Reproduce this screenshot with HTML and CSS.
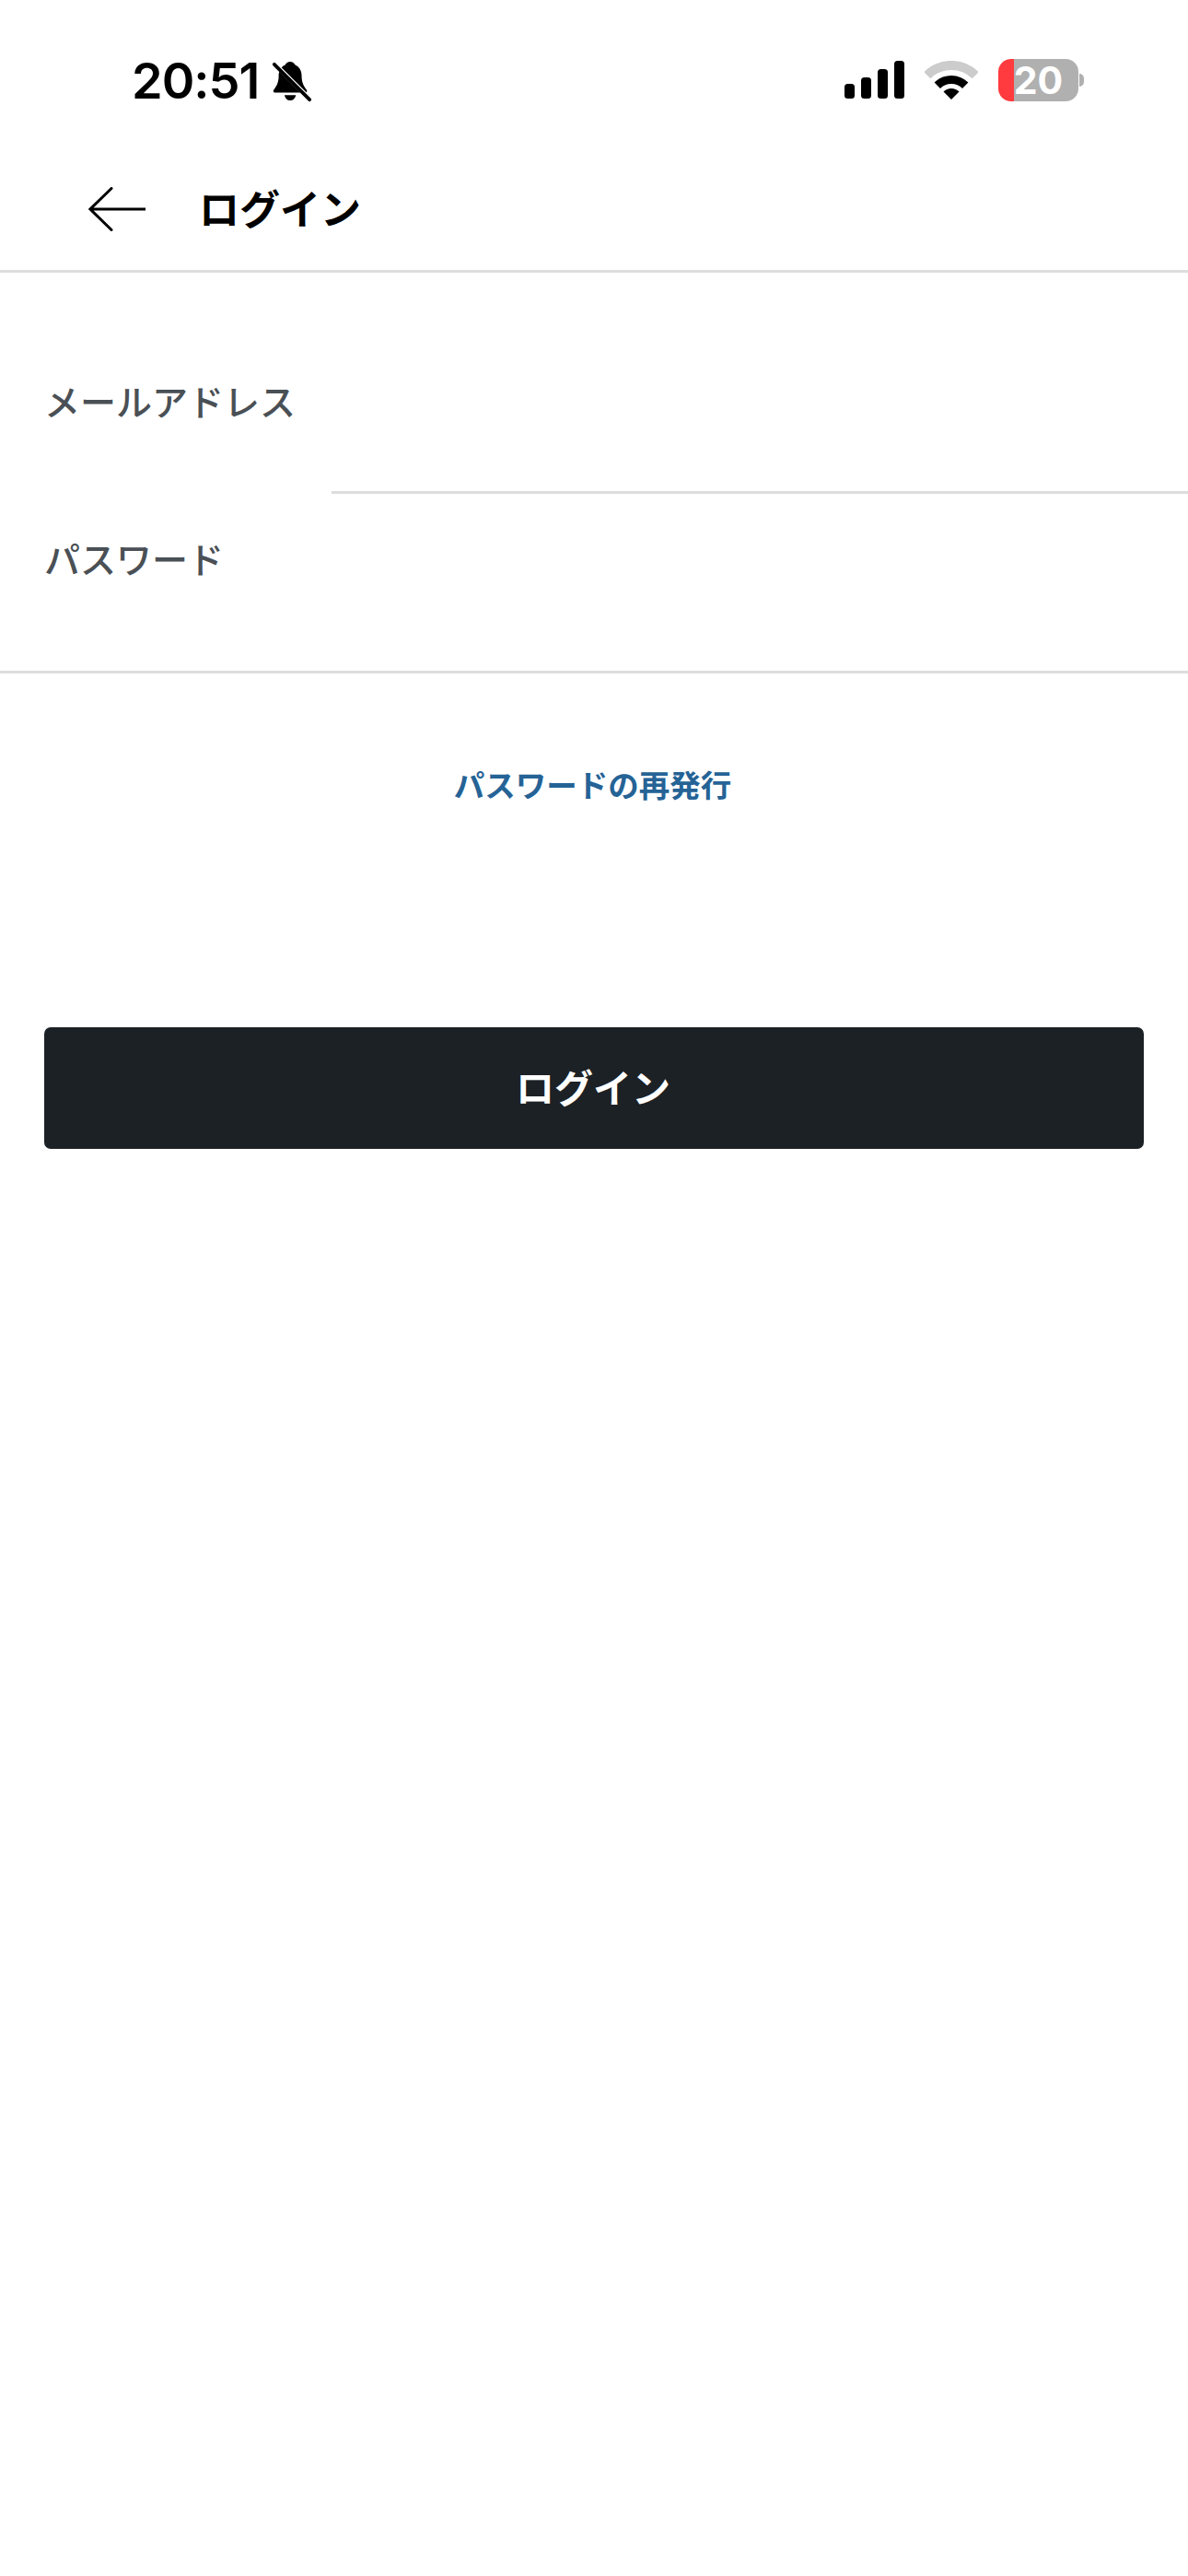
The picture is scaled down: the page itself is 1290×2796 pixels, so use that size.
FILE: index.html
```html
<!DOCTYPE html>
<html lang="ja">

<head>
	<meta charset="utf-8" />
	<title>ログイン</title>
	<link rel="stylesheet" href="styles.css">
</head>

<body>
	<div class="statusbar">
		<span class="statusbar-time">20:51</span>
		<svg class="icon-bell" width="46" height="48" viewBox="0 0 48 48">
			<path d="M22 2c-3 0-5 2-6 4-5 2-7 7-7 12 0 7-2 11-5 15-2 2-1 4 1 4h34c2 0 3-2 1-4-3-4-5-8-5-15 0-5-2-10-7-12-1-2-3-4-6-4z" />
			<path d="M15.500 40h13c-1 4-3 6-6.500 6s-5.500-2-6.500-6z" />
			<path class="bell-halo" d="M1 1l42 42" />
			<path class="bell-slash" d="M4 5l40 40" />
		</svg>
		<div class="statusbar-right">
			<svg width="65" height="41" viewBox="0 0 65 41">
				<rect x="0" y="25" width="11" height="16" rx="3.500" />
				<rect x="18" y="18" width="11" height="23" rx="3.500" />
				<rect x="36" y="9" width="11" height="32" rx="3.500" />
				<rect x="54" y="0" width="11" height="41" rx="3.500" />
			</svg>
			<svg class="icon-wifi" width="58" height="42" viewBox="0 0 58 42">
				<path class="wifi-outer" d="M2.800 15.800a37 37 0 0 1 52.400 0" />
				<path class="wifi-middle" d="M13.800 26.800a21.500 21.500 0 0 1 30.400 0" />
				<path d="M29 42l-8.500-8.500a12 12 0 0 1 17 0z" />
			</svg>
			<div class="battery">
				<div class="battery-body">20</div>
				<div class="battery-cap"></div>
			</div>
		</div>
	</div>

	<div class="header">
		<svg class="icon-back" width="62" height="48" viewBox="0 0 62 48">
			<path d="M62 24H2M25 1.500L2 24l23 22.500" />
		</svg>
		<span class="header-title">ログイン</span>
	</div>

	<div class="form">
		<div class="form-row form-row-email">
			<div class="form-label">メールアドレス</div>
			<div class="form-field"></div>
		</div>
		<div class="form-row form-row-password">
			<div class="form-label">パスワード</div>
		</div>
	</div>

	<a class="reset-link" href="#">パスワードの再発行</a>

	<a class="button-login" href="#">ログイン</a>
</body>

</html>
```

FILE: styles.css
```css
body {
	margin: 0;
	background: #fff;
	color: #000;
	font-family: "Noto Sans CJK JP", "Noto Sans", sans-serif;
}

a {
	text-decoration: none;
}

/* Status bar */

.statusbar {
	display: flex;
	align-items: center;
	box-sizing: border-box;
	height: 160px;
	padding: 16px 113px 0 143px;
}

.statusbar-time {
	font-family: Inter, sans-serif;
	font-size: 54px;
	font-weight: 600;
	letter-spacing: -1px;
	line-height: 60px;
}

.icon-bell {
	margin-left: 13px;
}

.bell-halo {
	fill: none;
	stroke: #fff;
	stroke-width: 5;
}

.bell-slash {
	fill: none;
	stroke: #000;
	stroke-width: 4;
	stroke-linecap: round;
}

.statusbar-right {
	display: flex;
	align-items: center;
	gap: 22px;
	margin-top: -3px;
	margin-left: auto;
}

.wifi-outer {
	fill: none;
	stroke: #ccc;
	stroke-width: 10;
}

.wifi-middle {
	fill: none;
	stroke: #000;
	stroke-width: 9;
}

.battery {
	display: flex;
	align-items: center;
}

.battery-body {
	width: 87px;
	height: 46px;
	border-radius: 14px;
	background: linear-gradient(to right, #ff3b3f 17px, #b0b0b0 17px);
	color: #fff;
	font-family: Inter, sans-serif;
	font-size: 41px;
	font-weight: 700;
	line-height: 46px;
	text-align: center;
}

.battery-cap {
	width: 5px;
	height: 14px;
	margin-left: 1px;
	border-radius: 0 7px 7px 0;
	background: #b0b0b0;
}

/* Header */

.header {
	display: flex;
	align-items: center;
	gap: 58px;
	height: 133px;
	padding-left: 96px;
	border-bottom: 3px solid #ddd;
}

.icon-back {
	fill: none;
	stroke: #000;
	stroke-width: 3;
	stroke-linecap: round;
}

.header-title {
	margin-top: -4px;
	font-size: 44px;
	font-weight: 700;
}

/* Form */

.form {
	border-bottom: 3px solid #ddd;
}

.form-row {
	display: flex;
	box-sizing: border-box;
}

.form-row-email {
	height: 240px;
	padding-top: 110px;
}

.form-row-password {
	height: 192px;
	padding-top: 41px;
}

.form-label {
	box-sizing: border-box;
	width: 360px;
	padding-left: 48px;
	color: #4a5055;
	font-size: 39px;
	font-weight: 500;
	line-height: 56px;
}

.form-field {
	flex: 1;
	border-bottom: 3px solid #ddd;
}

.reset-link {
	display: block;
	margin-top: 95px;
	padding-right: 3px;
	color: #256396;
	font-size: 33.500px;
	font-weight: 700;
	line-height: 50px;
	text-align: center;
}

.button-login {
	display: block;
	height: 132px;
	margin: 239px 48px 0;
	padding-right: 2px;
	border-radius: 7px;
	background: #1c2125;
	color: #fff;
	font-size: 42px;
	font-weight: 700;
	line-height: 128px;
	text-align: center;
}
```
